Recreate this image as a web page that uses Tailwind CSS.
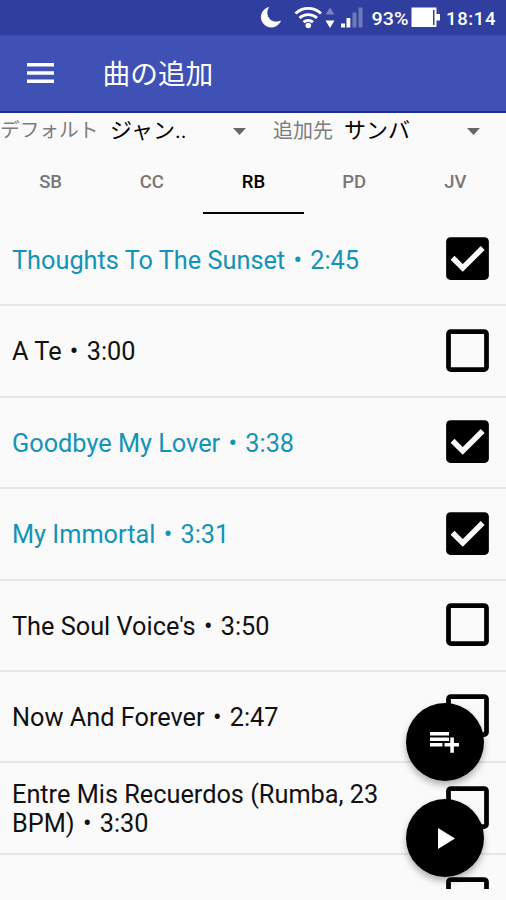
<!DOCTYPE html>
<html lang="ja">
<head>
<meta charset="utf-8">
<title>曲の追加</title>
<script src="https://cdn.jsdelivr.net/npm/@tailwindcss/browser@4"></script>
</head>
<body class="bg-[#fafafa]">
<svg class="hidden">
  <symbol id="on" viewBox="0 0 24 24"><rect x="3" y="3" width="18" height="18" rx="1.800"/><path d="M5.700 11.700L10 16l8.400-8.400" fill="none" stroke="#fafafa" stroke-width="2.300"/></symbol>
  <symbol id="off" viewBox="0 0 24 24"><path d="M19 5v14H5V5h14m0-2H5a2 2 0 0 0-2 2v14a2 2 0 0 0 2 2h14a2 2 0 0 0 2-2V5a2 2 0 0 0-2-2z"/></symbol>
</svg>
<div class="relative flex h-[900px] w-[506px] flex-col overflow-hidden bg-[#fafafa] font-[Roboto,'Noto_Sans_CJK_JP',sans-serif] text-black">
  <div class="h-[35px] shrink-0 bg-[#303f9f] text-white">
    <svg class="block" width="506" height="35" viewBox="0 0 506 35" fill="#fff">
      <path d="M268.500 7.500A10 10 0 1 0 280.500 21A9.300 9.300 0 0 1 268.500 7.500z" stroke="#fff" stroke-width=".8"/>
      <g fill="none" stroke="#fff" stroke-width="2.900"><path d="M295.500 13.500a18.500 18.500 0 0 1 25.500 0M299.500 18a13 13 0 0 1 17.500 0M303.500 22.200a7.500 7.500 0 0 1 9.500 0"/></g>
      <circle cx="308.300" cy="25.500" r="2.800"/>
      <path d="M325.500 14.500l4.500-7 4.500 7z" opacity=".35"/><path d="M325.500 20.500h9l-4.500 7.500z"/>
      <path d="M341 23.500h4v4h-4zM346.500 18h3.800v9.500h-3.800z"/><path d="M352.500 12.500h4v15h-4zM358.500 7.500h4v20h-4z" opacity=".3"/>
      <path fill-rule="evenodd" d="M411.500 7.500h25V14h3.500v6.500h-3.500V27h-25zM433 10v15h1.500V10z"/>
      <text x="371.500" y="24.500" font-size="18.500" font-weight="500" textLength="37" lengthAdjust="spacingAndGlyphs">93%</text>
      <text x="446" y="24.500" font-size="18.500" font-weight="500" textLength="49.500">18:14</text>
    </svg>
  </div>
  <header class="flex h-[78px] shrink-0 items-center border-b-2 border-[#20308f] bg-[#3f51b5] pl-[26.500px] text-white">
    <svg width="27" height="20" viewBox="0 0 27 20" fill="#fff"><path d="M0 0h27v3.500H0zM0 8.200h27v3.500H0zM0 16.400h27v3.500H0z"/></svg>
    <h1 class="ml-[49px] pt-[4px] text-[27.700px] leading-[40px]">曲の追加</h1>
  </header>
  <div class="flex h-[36px] shrink-0 items-center text-[20px] leading-[36px] whitespace-nowrap">
    <span class="w-[110px] text-[19.700px] text-[#7c7c7c]">デフォルト</span>
    <span class="w-[123px] text-[22px]">ジャン..</span>
    <svg width="13" height="7" viewBox="0 0 13 7" fill="#666"><path d="M0 0h13L6.500 7z"/></svg>
    <span class="ml-[27px] w-[71px] text-[#7c7c7c]">追加先</span>
    <span class="w-[123px] text-[22px]">サンバ</span>
    <svg width="13" height="7" viewBox="0 0 13 7" fill="#666"><path d="M0 0h13L6.500 7z"/></svg>
  </div>
  <nav class="mb-[1px] grid h-[65px] shrink-0 grid-cols-5 text-center text-[18.500px] leading-[66px] font-medium text-[#777]">
    <span>SB</span><span>CC</span><span class="ml-[1px] h-[65px] border-b-[2.500px] border-black text-black">RB</span><span>PD</span><span>JV</span>
  </nav>
  <main class="h-[674px] shrink-0 overflow-hidden text-[25.300px] leading-[29.500px]">
    <div class="flex h-[91.400px] items-center justify-between border-b-2 border-[#e6e6e6] pr-[10px] pl-[12px] text-[#1393b7]"><span class="pt-[2px]">Thoughts To The Sunset <span class="mx-[2px]">•</span> 2:45</span><svg class="mb-[1.500px] size-[57px] text-black" fill="currentColor"><use href="#on"/></svg></div>
    <div class="flex h-[91.400px] items-center justify-between border-b-2 border-[#e6e6e6] pr-[10px] pl-[12px] text-[#111]"><span class="pt-[2px]">A Te <span class="mx-[2px]">•</span> 3:00</span><svg class="mb-[1.500px] size-[57px] text-black" fill="currentColor"><use href="#off"/></svg></div>
    <div class="flex h-[91.400px] items-center justify-between border-b-2 border-[#e6e6e6] pr-[10px] pl-[12px] text-[#1393b7]"><span class="pt-[2px]">Goodbye My Lover <span class="mx-[2px]">•</span> 3:38</span><svg class="mb-[1.500px] size-[57px] text-black" fill="currentColor"><use href="#on"/></svg></div>
    <div class="flex h-[91.400px] items-center justify-between border-b-2 border-[#e6e6e6] pr-[10px] pl-[12px] text-[#1393b7]"><span class="pt-[2px]">My Immortal <span class="mx-[2px]">•</span> 3:31</span><svg class="mb-[1.500px] size-[57px] text-black" fill="currentColor"><use href="#on"/></svg></div>
    <div class="flex h-[91.400px] items-center justify-between border-b-2 border-[#e6e6e6] pr-[10px] pl-[12px] text-[#111]"><span class="pt-[2px]">The Soul Voice's <span class="mx-[2px]">•</span> 3:50</span><svg class="mb-[1.500px] size-[57px] text-black" fill="currentColor"><use href="#off"/></svg></div>
    <div class="flex h-[91.400px] items-center justify-between border-b-2 border-[#e6e6e6] pr-[10px] pl-[12px] text-[#111]"><span class="pt-[2px]">Now And Forever <span class="mx-[2px]">•</span> 2:47</span><svg class="mb-[1.500px] size-[57px] text-black" fill="currentColor"><use href="#off"/></svg></div>
    <div class="flex h-[91.400px] items-center justify-between border-b-2 border-[#e6e6e6] pr-[10px] pl-[12px] text-[#111]"><span class="pt-[2px]">Entre Mis Recuerdos (Rumba, 23<br>BPM) <span class="mx-[2px]">•</span> 3:30</span><svg class="mb-[1.500px] size-[57px] text-black" fill="currentColor"><use href="#off"/></svg></div>
    <div class="flex h-[91.400px] items-center justify-end pr-[10px]"><svg class="mb-[3px] size-[57px] text-black" fill="currentColor"><use href="#off"/></svg></div>
  </main>
  <button class="absolute top-[703px] left-[406px] flex size-[78px] items-center justify-center rounded-full bg-black shadow-[0_4px_7px_rgba(0,0,0,0.3)]">
    <svg width="30" height="22" viewBox="0 0 30 22" fill="#fff"><path d="M0 1h19v3.500H0zM0 6.500h19V10H0zM0 12h12.500v3.500H0zM20.300 6.500h3.600V12H29v3.500h-5.100v6.300h-3.600v-6.300H14.500V12h5.800z"/></svg>
  </button>
  <button class="absolute top-[799px] left-[406px] flex size-[78px] items-center justify-center rounded-full bg-black shadow-[0_4px_7px_rgba(0,0,0,0.3)]">
    <svg class="ml-[3px]" width="17" height="21" viewBox="0 0 17 21" fill="#fff"><path d="M0 0v21l17-10.500z"/></svg>
  </button>
</div>
</body>
</html>
